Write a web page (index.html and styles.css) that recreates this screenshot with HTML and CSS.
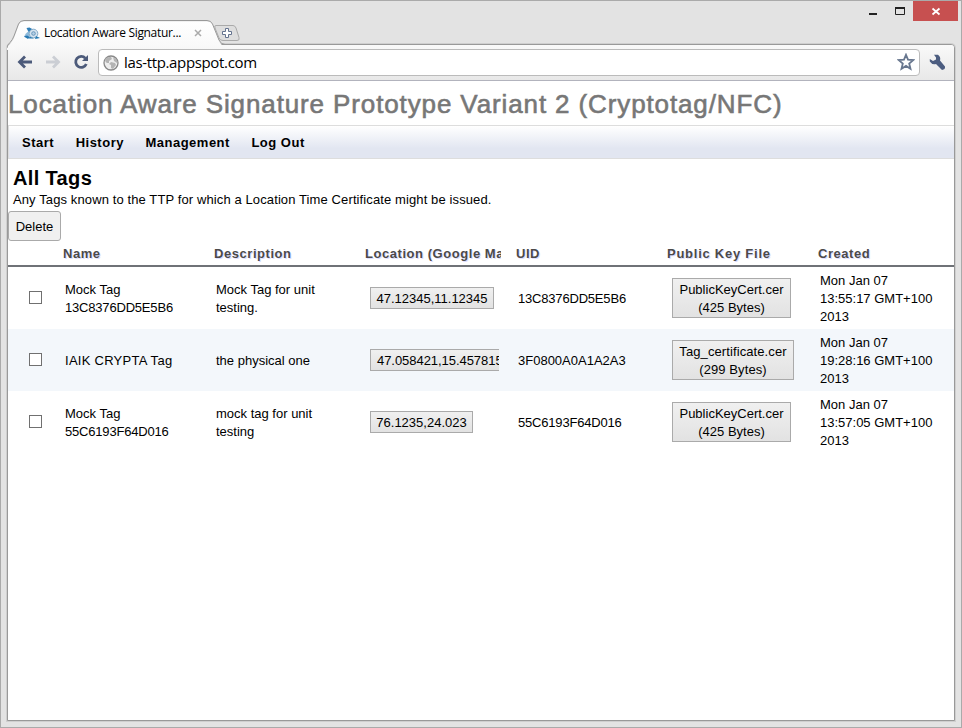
FILE: index.html
```html
<!DOCTYPE html>
<html lang="en">
<head>
<meta charset="utf-8">
<title>Location Aware Signature</title>
<link rel="stylesheet" href="styles.css">
</head>
<body>
<div class="window">
  <header class="tabstrip">
    <svg class="tab-shape" width="246" height="30" viewBox="0 0 246 30">
      <defs><linearGradient id="tabfill" x1="0" y1="0" x2="0" y2="1"><stop offset="0" stop-color="#fff"/><stop offset="1" stop-color="#f8f8f8"/></linearGradient></defs>
      <path d="M0 30V26.500Q5 23 7 18L12 4.500Q13.500 1.500 17 1.500H200Q204 1.500 205.500 4.500L212 21Q213.500 25.500 218 25.500H8V30Z" fill="url(#tabfill)"/>
      <path d="M0 28Q0 25 3 22.500Q5.500 20 7 16L11.500 4Q13 .500 17 .500H200Q204 .500 205.500 4L212 20Q214 24.500 218 24.500H246" fill="none" stroke="#999"/>
      <path d="M209 5.500H226Q228 5.500 229 8L232 17.500Q233 20.500 230 20.500H216Q213 20.500 212 18L208 8Q207 5.500 209 5.500Z" fill="#dedede" stroke="#aaa"/>
      <path d="M218.500 8.500h3v3h3v3h-3v3h-3v-3h-3v-3h3z" fill="#fff" stroke="#64738f"/>
    </svg>
    <div class="tab">
      <svg class="favicon" width="16" height="16" viewBox="0 0 16 16">
        <path d="M2.500 3L5.500 2.500L10 5L5 8Z" fill="#2e7eb7"/><path d="M0 12Q2 7 5 6.500L6 11L3 12.500Z" fill="#8db9da"/><path d="M0 11.500L3 10.500L6 12L4 14Z" fill="#2678b1"/>
        <circle cx="9.500" cy="8.500" r="4.300" fill="#d5e3ef" stroke="#86acc9"/><circle cx="9.500" cy="8.500" r="1.800" fill="#b6d0e4" stroke="#6797bd"/>
        <path d="M5.500 11.500L10 13.500L5 13.500ZM12 11L16 13L11 14Z" fill="#247ab3"/>
      </svg>
      <span class="tab-title">Location Aware Signatur...</span>
      <svg class="tab-close" width="8" height="8" viewBox="0 0 8 8"><path d="M1 1L7 7M7 1L1 7" stroke="#aaa" stroke-width="1.500"/></svg>
    </div>
    <div class="controls">
      <svg width="28" height="20" viewBox="0 0 28 20"><path d="M10 12h8v2h-8z" fill="#222"/></svg>
      <svg width="26" height="20" viewBox="0 0 26 20"><path d="M8.500 6.500h9v7h-9z" fill="none" stroke="#222"/><path d="M8 6h10v2H8z" fill="#222"/></svg>
      <svg class="close" width="45" height="20" viewBox="0 0 45 20"><path d="M19.500 7.500L26.500 13.500M26.500 7.500L19.500 13.500" stroke="#fff" stroke-width="1.800"/></svg>
    </div>
  </header>
  <div class="client">
    <div class="toolbar">
      <svg class="tool" width="16" height="16" viewBox="0 0 16 16"><path d="M8 2.500L2.500 8L8 13.500M3 8H15" fill="none" stroke="#4c5a7a" stroke-width="2.800"/></svg>
      <svg class="tool" width="16" height="16" viewBox="0 0 16 16"><path d="M8 2.500L13.500 8L8 13.500M13 8H1" fill="none" stroke="#cbced4" stroke-width="2.800"/></svg>
      <svg class="tool reload" width="16" height="16" viewBox="0 0 16 16"><path d="M12.300 4.200A5.500 5.500 0 1 0 13.300 10" fill="none" stroke="#4c5a7a" stroke-width="2.800"/><path d="M15 1V7H9Z" fill="#4c5a7a"/></svg>
      <div class="omnibox">
        <svg width="16" height="16" viewBox="0 0 16 16"><circle cx="8" cy="8" r="7" fill="#ededed" stroke="#888" stroke-width="1.300"/><path d="M2 4Q4 1.500 8 2L9 4L6 6L6 8L4 8Q2 7 2 4ZM8 7L12 8L13 10L10 14L8 13L8 10L6 9ZM10 2L14 5L14 8L11 6Z" fill="#b4b4b4"/></svg>
        <span class="url">las-ttp.appspot.com</span>
        <svg class="star" width="18" height="18" viewBox="0 0 18 18"><path d="M9 1.800L11 6.700L16.200 7.100L12.200 10.500L13.500 15.800L9 12.900L4.500 15.800L5.800 10.500L1.800 7.100L7 6.700Z" fill="#fff" stroke="#68778f" stroke-width="1.800"/></svg>
      </div>
      <svg class="wrench" width="17" height="17" viewBox="0 0 17 17"><path d="M5 .800L9 .800Q12 3 11 6.500L16 12.500Q16.500 15.500 13 16L7 10Q3 11 .800 7.500L.800 5L4 7L7 5.500L7 3.500Z" fill="#4c5d80"/></svg>
    </div>
    <main>
      <h1>Location Aware Signature Prototype Variant 2 (Cryptotag/NFC)</h1>
      <nav><a>Start</a><a>History</a><a>Management</a><a>Log Out</a></nav>
      <h2>All Tags</h2>
      <p>Any Tags known to the TTP for which a Location Time Certificate might be issued.</p>
      <button class="delete">Delete</button>
      <table>
        <colgroup><col class="pick"><col><col><col><col><col><col></colgroup>
        <thead><tr><th></th><th>Name</th><th>Description</th><th>Location (Google Maps)</th><th>UID</th><th class="key">Public Key File</th><th>Created</th></tr></thead>
        <tbody>
          <tr><td><i class="check"></i></td><td>Mock Tag<br><span class="id">13C8376DD5E5B6</span></td><td>Mock Tag for unit<br>testing.</td><td><button class="geo w1">47.12345,11.12345</button></td><td><span class="id">13C8376DD5E5B6</span></td><td><button class="file">PublicKeyCert.cer<br>(425 Bytes)</button></td><td>Mon Jan 07<br>13:55:17 GMT+100<br>2013</td></tr>
          <tr><td><i class="check"></i></td><td class="loose">IAIK CRYPTA Tag</td><td>the physical one</td><td><button class="geo w2">47.058421,15.457815</button></td><td>3F0800A0A1A2A3</td><td><button class="file wide">Tag_certificate.cer<br>(299 Bytes)</button></td><td>Mon Jan 07<br>19:28:16 GMT+100<br>2013</td></tr>
          <tr><td><i class="check"></i></td><td>Mock Tag<br><span class="id">55C6193F64D016</span></td><td>mock tag for unit<br>testing</td><td><button class="geo w3">76.1235,24.023</button></td><td><span class="id">55C6193F64D016</span></td><td><button class="file">PublicKeyCert.cer<br>(425 Bytes)</button></td><td>Mon Jan 07<br>13:57:05 GMT+100<br>2013</td></tr>
        </tbody>
      </table>
    </main>
  </div>
</div>
</body>
</html>
```
FILE: styles.css
```css
* { box-sizing: border-box; }
html, body { margin: 0; height: 100%; overflow: hidden; }
body { font: 13px/18px "Liberation Sans", Arial, sans-serif; color: #000; }
svg { display: block; flex: none; }
.window { height: 728px; border: 1px solid #aaa; background: #e3e3e3; padding: 0 6px 6px; display: flex; flex-direction: column; }
.tabstrip { height: 43px; flex: none; display: flex; position: relative; }
.tab-shape { position: absolute; left: 0; top: 19px; z-index: 2; }
.tab { position: relative; z-index: 3; display: flex; align-items: center; height: 24px; margin: 20px 0 0 17px; width: 178px; }
.tab-title { font: 12px/16px "Open Sans", "Noto Sans", sans-serif; letter-spacing: -.32px; margin-left: 4px; width: 150px; white-space: nowrap; }
.controls { display: flex; margin-left: auto; margin-right: -3px; height: 20px; }
.close { background: #c75050; }
.client { flex: 1; min-height: 0; border: 1px solid #999; border-radius: 4px 4px 0 0; background: #fff; box-shadow: 0 0 0 1px #cfcfcf; display: flex; flex-direction: column; }
.toolbar { height: 36px; flex: none; display: flex; align-items: center; background: linear-gradient(#f9f9f9, #e8e8e8); border-bottom: 1px solid #b2b3bd; border-radius: 3px 3px 0 0; padding: 0 8px 0 9px; }
.tool { margin: -1px 12px 0 0; }
.reload { margin-right: 9px; }
.omnibox { flex: 1; height: 27px; display: flex; align-items: center; background: #fff; border: 1px solid #bbb; border-radius: 4px; padding: 0 4px; }
.url { flex: 1; margin: -2px 0 0 5px; font: 15px/22px "Open Sans", "Noto Sans", sans-serif; letter-spacing: -.35px; }
.star { margin-top: -1px; }
.wrench { margin-left: 9px; }
main { flex: 1; min-height: 0; }
h1 { margin: 0; height: 44px; font-size: 26px; line-height: 46px; font-weight: 400; letter-spacing: .88px; color: #777; -webkit-text-stroke: .6px #777; white-space: nowrap; }
nav { height: 34px; display: flex; gap: 21.5px; padding-left: 13px; border: 1px solid #ddd; border-right: 0; background: linear-gradient(#fff, #e2e6f1 70%, #e2e6f1); line-height: 33px; font-weight: 700; letter-spacing: .5px; }
h2 { margin: 8px 0 0 5px; font-size: 20px; line-height: 22px; height: 23px; letter-spacing: .35px; }
p { margin: 0 0 0 5px; height: 21px; line-height: 19px; white-space: nowrap; letter-spacing: .11px; }
button { font: inherit; color: #000; display: block; padding: 0; }
.delete { width: 53px; height: 30px; border: 1px solid #aaa; border-radius: 3px; background: #f0f0f0; padding-top: 1px; }
table { width: 946px; table-layout: fixed; border-collapse: separate; border-spacing: 0; }
.pick { width: 40px; }
th { height: 26px; padding: 1px 0 0 15px; text-align: left; color: #4b4a4a; text-shadow: #ddf 1px 1px 0; border-bottom: 2px solid #6f7277; overflow: hidden; white-space: nowrap; line-height: 23px; letter-spacing: .55px; }
.key { letter-spacing: .75px; }
td { height: 62px; padding: 2px 0 0 15px; border: 2px solid transparent; overflow: hidden; white-space: nowrap; }
tbody tr:nth-child(even) td { background: #f3f7fb; border-color: #f3f7fb; }
td:first-child { padding-left: 19px; }
.check { display: block; width: 13px; height: 13px; border: 1px solid #707070; background: #fff; margin-top: -3px; }
.id { letter-spacing: -.19px; }
.loose { letter-spacing: .27px; }
.geo, .file { margin: -2px 0 0 3px; border: 1px solid #aaa; background: linear-gradient(#f0f0f0, #e2e2e2); padding-top: 2px; }
.geo { height: 22px; }
.file { width: 119px; height: 40px; }
.wide { width: 122px; letter-spacing: .1px; }
.w1 { width: 124px; }
.w2 { width: 144px; text-align: left; padding-left: 6px; letter-spacing: -.05px; }
.w3 { width: 103px; }
```
